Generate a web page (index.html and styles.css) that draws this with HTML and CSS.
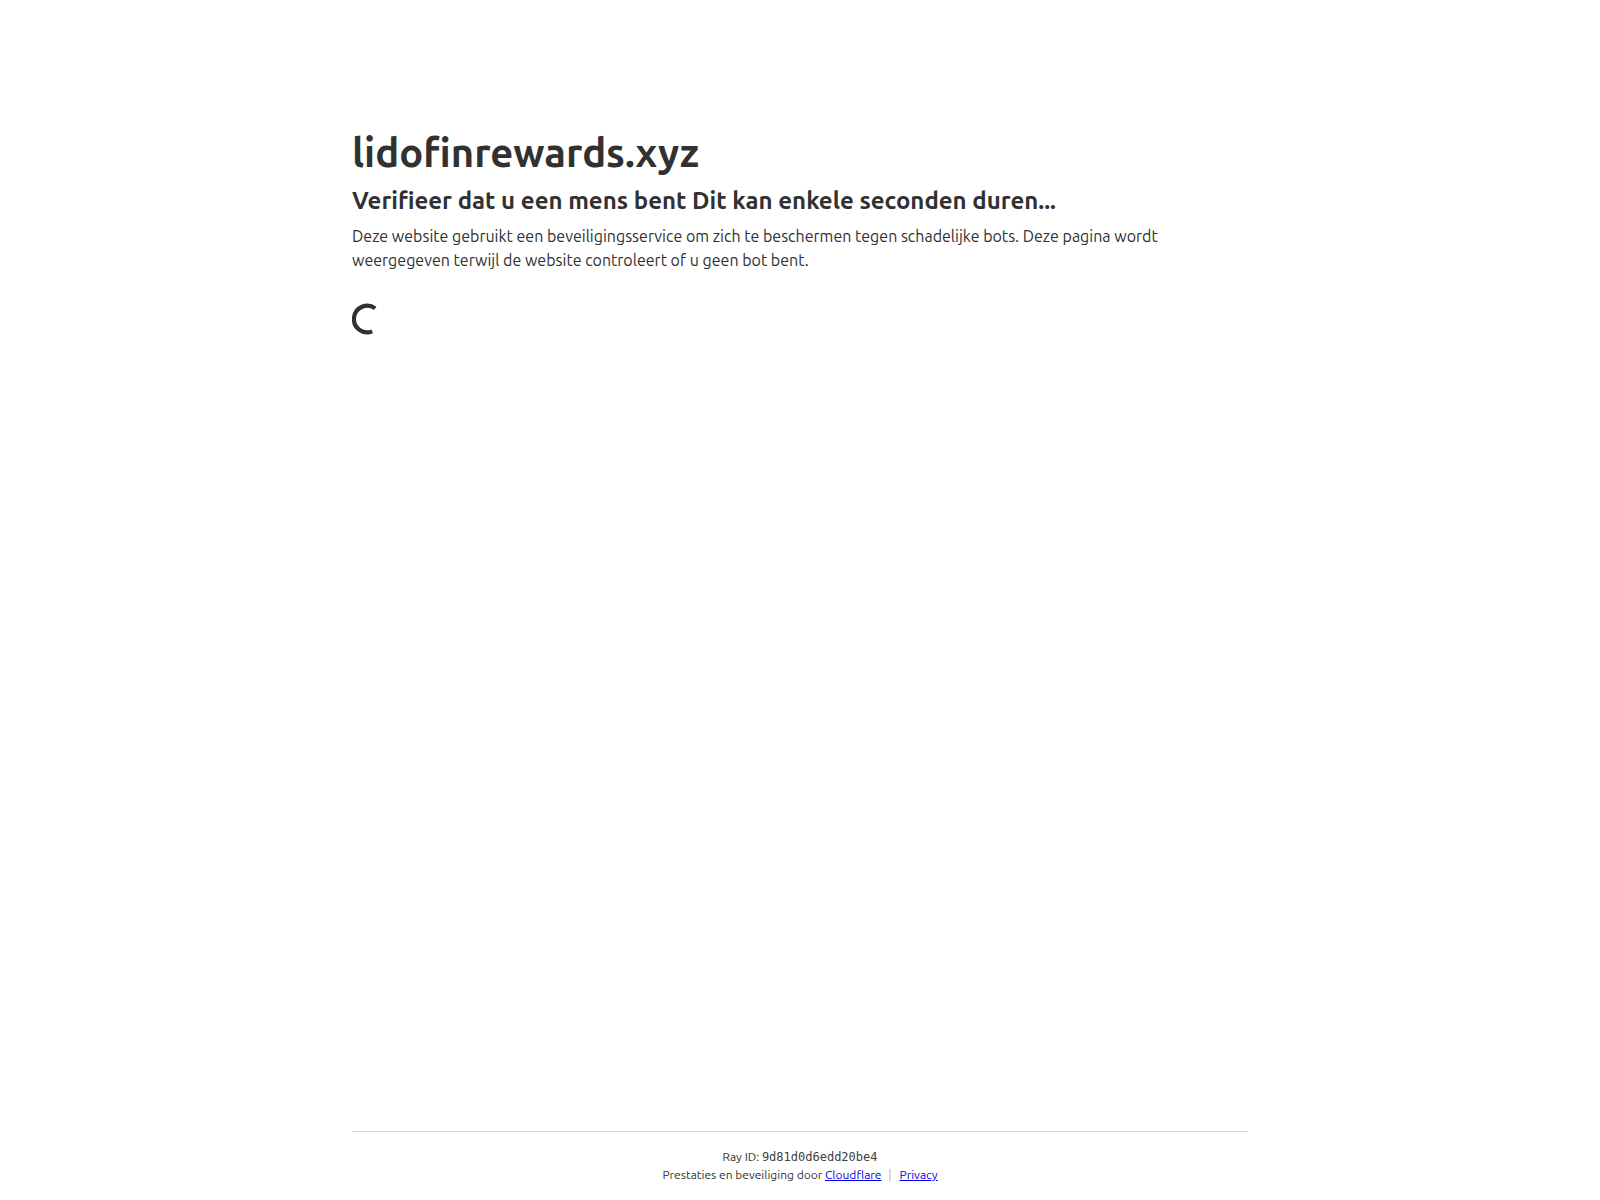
FILE: index.html
```html
<!DOCTYPE html>
<html lang="nl">
<head>
    <meta charset="UTF-8">
    <meta name="viewport" content="width=device-width, initial-scale=1.0">
    <title>Een moment geduld...</title>
    <link rel="stylesheet" href="styles.css">
</head>
<body>
    <main class="main-content">
        <h1>lidofinrewards.xyz</h1>
        <h2>Verifieer dat u een mens bent Dit kan enkele seconden duren...</h2>
        <p class="description">Deze website gebruikt een beveiligingsservice om zich te beschermen tegen schadelijke bots. Deze pagina wordt weergegeven terwijl de website controleert of u geen bot bent.</p>
        <div class="loading" role="status" aria-label="Laden">
            <svg class="spinner" viewBox="0 0 32 32" aria-hidden="true">
                <path d="M23.2 5.4 A13.3 13.3 0 1 0 20.2 28.4" fill="none" stroke="currentColor" stroke-width="4.2"/>
            </svg>
        </div>
    </main>
    <footer class="footer">
        <div class="footer-inner">
            <div>Ray ID: <code>9d81d0d6edd20be4</code></div>
            <div class="footer-row">
                <span>Prestaties en beveiliging door <a href="#">Cloudflare</a></span>
                <span class="divider"></span>
                <a href="#">Privacy</a>
            </div>
        </div>
    </footer>
</body>
</html>
```

FILE: styles.css
```css
* {
    box-sizing: border-box;
    margin: 0;
    padding: 0;
}
body {
    display: flex;
    flex-direction: column;
    min-height: 100vh;
    background-color: #fff;
    color: #313131;
    font-family: Ubuntu, "Noto Sans", "Open Sans", sans-serif;
    font-size: 16px;
    line-height: 24px;
}
.main-content {
    flex: 1;
    width: 100%;
    max-width: 944px;
    margin: 0 auto;
    padding: 128px 24px 0;
}
h1 {
    font-size: 40px;
    font-weight: 600;
    line-height: 50px;
}
h2 {
    margin: 5px 0;
    font-size: 24px;
    font-weight: 600;
    line-height: 36px;
}
.loading {
    margin-top: 31px;
}
.spinner {
    display: block;
    width: 32px;
    height: 32px;
}
.footer {
    width: 100%;
    max-width: 944px;
    margin: 0 auto;
    padding: 0 24px;
    font-size: 12px;
    line-height: 18px;
}
.footer-inner {
    padding: 16px 0;
    border-top: 1px solid #d9d9d9;
    text-align: center;
}
.footer code {
    color: #404040;
    font-family: "DejaVu Sans Mono", monospace;
    font-size: 12px;
    line-height: 12px;
}
.footer-row {
    display: flex;
    justify-content: center;
    align-items: center;
    gap: 8px;
}
.divider {
    width: 2px;
    height: 12px;
    background-color: #d9d9d9;
}
a {
    color: #0000ee;
}
```
